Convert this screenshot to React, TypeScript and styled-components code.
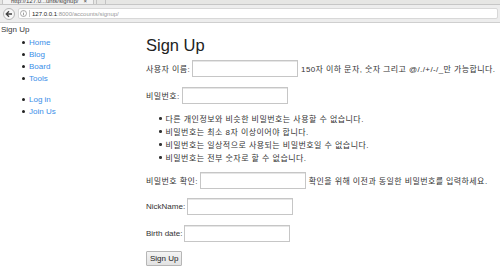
import React from "react";
import styled, { createGlobalStyle } from "styled-components";

const Global = createGlobalStyle`
  html, body { margin: 0; padding: 0; background: #fff; }
  body {
    font-family: "Liberation Sans", "Noto Sans CJK KR", Arial, sans-serif;
    color: #333;
    width: 500px;
    height: 271px;
    overflow: hidden;
  }
  * { box-sizing: border-box; }
`;

const Chrome = styled.div`
  height: 23px;
  display: flex;
  flex-direction: column;
`;

const TabStrip = styled.div`
  height: 5px;
  background: #e6e6e4;
  border-bottom: 1px solid #c6c6c6;
  overflow: hidden;
  display: flex;
  align-items: flex-end;
`;

const Tab = styled.div`
  height: 9px;
  width: 92px;
  margin-left: 2px;
  padding: 0 6px 0 8px;
  display: flex;
  align-items: flex-end;
  justify-content: space-between;
  font-size: 6px;
  line-height: 6px;
  color: #3c3c3c;
  border: 1px solid #c3c3c3;
  border-bottom: none;
  border-radius: 3px 3px 0 0;
  background: #f2f2f2;
  white-space: nowrap;
`;

const NewTab = styled.div`
  height: 9px;
  width: 10px;
  margin-left: 2px;
  border: 1px solid #c3c3c3;
  border-bottom: none;
  border-radius: 3px 3px 0 0;
`;

const Toolbar = styled.div`
  flex: 1;
  background: #ededed;
  border-bottom: 1px solid #cfcfcf;
  display: flex;
  align-items: center;
  padding: 0 2px 0 3px;
  gap: 3px;
`;

const BackButton = styled.div`
  width: 12px;
  height: 12px;
  border-radius: 50%;
  border: 1px solid #b5b5b5;
  background: #f7f7f7;
  display: flex;
  align-items: center;
  justify-content: center;
`;

const UrlField = styled.div`
  flex: 1;
  height: 11px;
  background: #fff;
  border: 1px solid #d8d8d8;
  border-radius: 2px;
  display: flex;
  align-items: center;
  padding-left: 1px;
  gap: 2px;
  font-size: 6px;
  white-space: nowrap;
`;

const Divider = styled.span`
  width: 1px;
  height: 7px;
  background: #c8c8c8;
`;

const Host = styled.span`
  color: #222;
`;

const Path = styled.span`
  color: #9a9a9a;
`;

const Page = styled.div`
  display: flex;
  flex-direction: column;
`;

const SiteTitle = styled.div`
  font-size: 8px;
  line-height: 9px;
  padding: 2px 0 0 1px;
  color: #3a3a3a;
`;

const Columns = styled.div`
  display: flex;
`;

const Sidebar = styled.nav`
  width: 146px;
  flex-shrink: 0;
  padding-top: 2px;
  display: flex;
  flex-direction: column;
  gap: 9px;
`;

const NavList = styled.ul`
  list-style: none;
  margin: 0;
  padding: 0 0 0 22px;
`;

const NavItem = styled.li`
  display: flex;
  align-items: center;
  height: 12px;
  font-size: 8px;
  &::before {
    content: "";
    width: 3px;
    height: 3px;
    border-radius: 50%;
    background: #222;
    margin-right: 4px;
  }
`;

const NavLink = styled.a`
  color: #3a8ee8;
  text-decoration: none;
`;

const Main = styled.main`
  display: flex;
  flex-direction: column;
  align-items: flex-start;
  padding-top: 2px;
`;

const Title = styled.h1`
  margin: 0 0 4px;
  font-size: 16.5px;
  line-height: 19px;
  font-weight: normal;
  color: #222;
`;

const Row = styled.p<{ $after?: number }>`
  margin: 0 0 ${(p) => p.$after ?? 9}px;
  height: 18px;
  display: flex;
  align-items: center;
  font-size: 8px;
  white-space: nowrap;
`;

const Label = styled.label<{ $ko?: boolean }>`
  margin-right: 2px;
  letter-spacing: ${(p) => (p.$ko ? "0.4px" : "0")};
`;

const Input = styled.input`
  width: 106px;
  height: 17px;
  margin: 0 3px 0 0;
  padding: 0 2px;
  border: 1px solid #c6c6c6;
  box-shadow: inset 0 1px 0 #e6e6e6;
  background: #fff;
  font-size: 8px;
`;

const HelpText = styled.span`
  color: #333;
  letter-spacing: 0.4px;
`;

const Rules = styled.ul`
  list-style: none;
  margin: 0 0 7px;
  padding: 1px 0 0 13px;
`;

const Rule = styled.li`
  display: flex;
  align-items: center;
  height: 13px;
  font-size: 8px;
  letter-spacing: 0.45px;
  &::before {
    content: "";
    width: 2.5px;
    height: 2.5px;
    border-radius: 50%;
    background: #333;
    margin-right: 4px;
  }
`;

const SubmitButton = styled.button`
  margin-top: 0;
  height: 15px;
  padding: 0 3px;
  font-family: inherit;
  font-size: 8px;
  color: #222;
  background: linear-gradient(#f4f4f4, #e2e2e2);
  border: 1px solid #b6b6b6;
  border-radius: 1px;
`;

const nav1 = ["Home", "Blog", "Board", "Tools"];
const nav2 = ["Log in", "Join Us"];
const rules = [
  "다른 개인정보와 비슷한 비밀번호는 사용할 수 없습니다.",
  "비밀번호는 최소 8자 이상이어야 합니다.",
  "비밀번호는 일상적으로 사용되는 비밀번호일 수 없습니다.",
  "비밀번호는 전부 숫자로 할 수 없습니다.",
];

export default function App() {
  return (
    <>
      <Global />
      <Chrome>
        <TabStrip>
          <Tab>
            <span>http://127.0...unts/signup/</span>
            <span>×</span>
          </Tab>
          <NewTab />
        </TabStrip>
        <Toolbar>
          <BackButton>
            <svg width="8" height="8" viewBox="0 0 8 8">
              <path d="M7 4H1.5M4 1.2L1.2 4 4 6.8" fill="none" stroke="#444" strokeWidth="1.3" />
            </svg>
          </BackButton>
          <UrlField>
            <svg width="7" height="7" viewBox="0 0 7 7">
              <circle cx="3.5" cy="3.5" r="3" fill="none" stroke="#888" strokeWidth="0.7" />
              <path d="M3.5 3v2.3" stroke="#888" strokeWidth="0.8" />
              <circle cx="3.5" cy="2" r="0.45" fill="#888" />
            </svg>
            <Divider />
            <span>
              <Host>127.0.0.1</Host>
              <Path>:8000/accounts/signup/</Path>
            </span>
          </UrlField>
        </Toolbar>
      </Chrome>
      <Page>
        <SiteTitle>Sign Up</SiteTitle>
        <Columns>
          <Sidebar>
            <NavList>
              {nav1.map((n) => (
                <NavItem key={n}>
                  <NavLink href="#">{n}</NavLink>
                </NavItem>
              ))}
            </NavList>
            <NavList>
              {nav2.map((n) => (
                <NavItem key={n}>
                  <NavLink href="#">{n}</NavLink>
                </NavItem>
              ))}
            </NavList>
          </Sidebar>
          <Main>
            <Title>Sign Up</Title>
            <Row>
              <Label $ko>사용자 이름:</Label>
              <Input type="text" />
              <HelpText>150자 이하 문자, 숫자 그리고 @/./+/-/_만 가능합니다.</HelpText>
            </Row>
            <Row $after={7}>
              <Label $ko>비밀번호:</Label>
              <Input type="password" />
            </Row>
            <Rules>
              {rules.map((r) => (
                <Rule key={r}>{r}</Rule>
              ))}
            </Rules>
            <Row $after={8}>
              <Label $ko>비밀번호 확인:</Label>
              <Input type="password" />
              <HelpText>확인을 위해 이전과 동일한 비밀번호를 입력하세요.</HelpText>
            </Row>
            <Row>
              <Label>NickName:</Label>
              <Input type="text" />
            </Row>
            <Row>
              <Label>Birth date:</Label>
              <Input type="text" />
            </Row>
            <SubmitButton type="submit">Sign Up</SubmitButton>
          </Main>
        </Columns>
      </Page>
    </>
  );
}
